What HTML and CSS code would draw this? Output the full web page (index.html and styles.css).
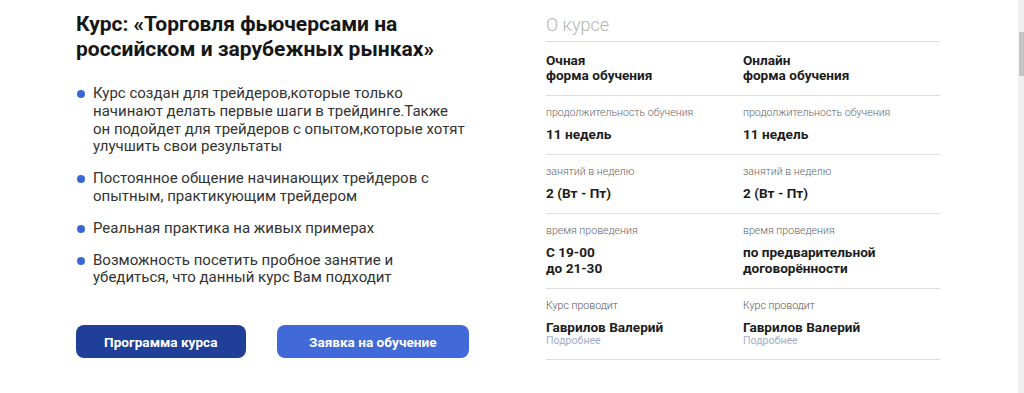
FILE: index.html
```html
<!DOCTYPE html>
<html lang="ru">
<head>
    <meta charset="UTF-8">
    <meta name="viewport" content="width=device-width, initial-scale=1.0">
    <title>Курс: Торговля фьючерсами</title>
    <link rel="stylesheet" href="styles.css">
</head>
<body>

    <main class="course">
        <!-- Левая колонка: описание и кнопки -->
        <section class="course-info">
            <h2 class="course-title">Курс: «Торговля фьючерсами на российском и зарубежных рынках»</h2>

            <ul class="course-list">
                <li>Курс создан для трейдеров,которые только начинают делать первые шаги в трейдинге.Также<br>он подойдет для трейдеров с опытом,которые хотят улучшить свои результаты</li>
                <li>Постоянное общение начинающих трейдеров с опытным, практикующим трейдером</li>
                <li>Реальная практика на живых примерах</li>
                <li>Возможность посетить пробное занятие и убедиться, что данный курс Вам подходит</li>
            </ul>

            <div class="button-group">
                <button type="button" class="btn btn-dark">Программа курса</button>
                <button type="button" class="btn btn-light">Заявка на обучение</button>
            </div>
        </section>

        <!-- Правая колонка: таблица "О курсе" -->
        <section class="course-about">
            <h3 class="about-title">О курсе</h3>

            <div class="about-row">
                <div class="about-cell">
                    <div class="about-form">Очная<br>форма обучения</div>
                </div>
                <div class="about-cell">
                    <div class="about-form">Онлайн<br>форма обучения</div>
                </div>
            </div>

            <div class="about-row">
                <div class="about-cell">
                    <div class="about-label">продолжительность обучения</div>
                    <div class="about-value">11 недель</div>
                </div>
                <div class="about-cell">
                    <div class="about-label">продолжительность обучения</div>
                    <div class="about-value">11 недель</div>
                </div>
            </div>

            <div class="about-row">
                <div class="about-cell">
                    <div class="about-label">занятий в неделю</div>
                    <div class="about-value">2 (Вт - Пт)</div>
                </div>
                <div class="about-cell">
                    <div class="about-label">занятий в неделю</div>
                    <div class="about-value">2 (Вт - Пт)</div>
                </div>
            </div>

            <div class="about-row">
                <div class="about-cell">
                    <div class="about-label">время проведения</div>
                    <div class="about-value">С 19-00<br>до 21-30</div>
                </div>
                <div class="about-cell">
                    <div class="about-label">время проведения</div>
                    <div class="about-value">по предварительной<br>договорённости</div>
                </div>
            </div>

            <div class="about-row">
                <div class="about-cell">
                    <div class="about-label about-label-dark">Курс проводит</div>
                    <div class="about-value">Гаврилов Валерий</div>
                    <a class="about-more" href="#">Подробнее</a>
                </div>
                <div class="about-cell">
                    <div class="about-label about-label-dark">Курс проводит</div>
                    <div class="about-value">Гаврилов Валерий</div>
                    <a class="about-more" href="#">Подробнее</a>
                </div>
            </div>
        </section>
    </main>

    <!-- Полоса прокрутки окна -->
    <div class="scrollbar"><div class="scrollbar-thumb"></div></div>

</body>
</html>
```

FILE: styles.css
```css
/* --- Общие стили --- */
body {
    font-family: Roboto, "Liberation Sans", Arial, sans-serif;
    background: #ffffff;
    color: #222;
    margin: 0;
    overflow: hidden;
}

.course {
    display: flex;
    gap: 77px;
    padding: 12px 0 0 76px;
}

/* --- Левая колонка --- */
.course-info { width: 393px; flex-shrink: 0; }

.course-title {
    margin: 0 0 23px;
    width: 420px;
    font-size: 21px;
    line-height: 25px;
    font-weight: 700;
    color: #161616;
}

.course-list {
    list-style: none;
    margin: 0;
    padding: 0;
}
.course-list li {
    position: relative;
    padding-left: 17px;
    margin-bottom: 14px;
    font-size: 15px;
    line-height: 17.8px;
    color: #333;
}
.course-list li:last-child { margin-bottom: 0; }
.course-list li::before {
    content: "";
    position: absolute;
    left: 1px;
    top: 5px;
    width: 8px;
    height: 8px;
    border-radius: 50%;
    background: #3b66d3;
}

.button-group {
    display: flex;
    gap: 31px;
    margin-top: 38px;
}
.btn {
    height: 33px;
    border: none;
    border-radius: 8px;
    color: #fff;
    font-family: inherit;
    font-size: 13.6px;
    font-weight: 700;
    cursor: pointer;
}
.btn-dark { width: 170px; background: #1f3f98; }
.btn-light { width: 193px; background: #4169d7; }

/* --- Правая колонка "О курсе" --- */
.course-about { width: 394px; flex-shrink: 0; }

.about-title {
    margin: 0;
    padding-bottom: 3px;
    font-size: 18px;
    line-height: 26px;
    font-weight: 300;
    color: #b3b3b3;
    border-bottom: 1px solid #dddddd;
}

.about-row {
    display: grid;
    grid-template-columns: 1fr 1fr;
    padding: 10px 0 12px;
    border-bottom: 1px solid #dddddd;
}
.about-row:first-of-type { padding-top: 11px; }

.about-form {
    font-size: 13.6px;
    line-height: 15px;
    font-weight: 700;
    color: #1c1c1c;
}

.about-label {
    font-size: 10.6px;
    line-height: 14px;
    font-weight: 300;
    color: #666;
    margin-bottom: 6px;
}
.about-label-dark { color: #555; }

.about-value {
    font-size: 13.6px;
    line-height: 16px;
    font-weight: 700;
    color: #1c1c1c;
}

.about-more {
    display: block;
    font-size: 10.6px;
    line-height: 12px;
    color: #a3aec6;
    text-decoration: none;
}

/* --- Полоса прокрутки --- */
.scrollbar {
    position: fixed;
    top: 0;
    right: 0;
    width: 6px;
    height: 100%;
    background: #f1f1f1;
}
.scrollbar-thumb {
    margin: 32px 0 0 1px;
    width: 5px;
    height: 44px;
    background: #c4c4c4;
}
```
